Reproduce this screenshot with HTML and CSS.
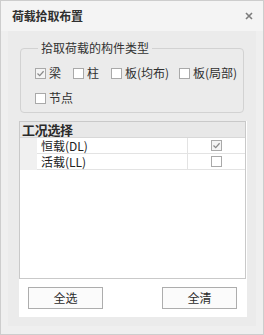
FILE: index.html
```html
<!DOCTYPE html>
<html lang="zh-CN">
<head>
<meta charset="utf-8">
<title>荷载拾取布置</title>
<link rel="stylesheet" href="styles.css">
</head>
<body>
<div class="window">
  <div class="titlebar">
    <span class="title">荷载拾取布置</span>
    <svg class="close" width="8" height="8" viewBox="0 0 8 8"><path d="M1 1L7 7M7 1L1 7" stroke="#7c7c7c" stroke-width="1.6" fill="none"/></svg>
  </div>
  <div class="frame">
    <div class="content">
      <fieldset class="group">
        <legend>拾取荷载的构件类型</legend>
        <div class="checks">
          <label class="item w38"><span class="cb checked"><svg width="9" height="9" viewBox="0 0 9 9"><path d="M1.5 4.5L3.7 6.6L7.6 2.2" stroke="#8a8a8a" stroke-width="1.3" fill="none"/></svg></span>梁</label>
          <label class="item w38"><span class="cb"></span>柱</label>
          <label class="item w68"><span class="cb"></span>板(均布)</label>
          <label class="item"><span class="cb"></span>板(局部)</label>
        </div>
        <div class="checks row2">
          <label class="item"><span class="cb"></span>节点</label>
        </div>
      </fieldset>
      <div class="panel">
        <div class="list">
          <div class="list-head"><span class="head-text">工况选择</span></div>
          <div class="list-row">
            <div class="rh"></div>
            <div class="name"><span class="name-text">恒载(DL)</span></div>
            <div class="chk"><span class="cb checked"><svg width="9" height="9" viewBox="0 0 9 9"><path d="M1.5 4.5L3.7 6.6L7.6 2.2" stroke="#8a8a8a" stroke-width="1.3" fill="none"/></svg></span></div>
          </div>
          <div class="list-row">
            <div class="rh"></div>
            <div class="name"><span class="name-text">活载(LL)</span></div>
            <div class="chk"><span class="cb"></span></div>
          </div>
        </div>
        <div class="buttons">
          <button class="btn">全选</button>
          <button class="btn">全清</button>
        </div>
      </div>
    </div>
  </div>
</div>
</body>
</html>
```
FILE: styles.css
```css
* { box-sizing: border-box; }
html, body { margin: 0; padding: 0; background: #ffffff; }
body { font-family: "Noto Sans CJK SC", "Noto Sans", sans-serif; color: #2b2b2b; }

.window {
  width: 264px;
  height: 335px;
  border: 1px solid #cdcdcd;
  background: #efefef;
  display: flex;
  flex-direction: column;
}

.titlebar {
  height: 30px;
  flex: none;
  background: #f4f4f4;
  display: flex;
  align-items: center;
  justify-content: space-between;
  padding: 0 10px 0 11px;
}
.title {
  font-size: 12px;
  font-weight: bold;
  color: #303030;
  letter-spacing: -0.2px;
  line-height: 14px;
}
.close { display: block; }

.frame {
  flex: 1;
  padding: 0 7px 8px 7px;
  background: #efefef;
  display: flex;
}
.content {
  flex: 1;
  background: #ebebeb;
  display: flex;
  flex-direction: column;
}

.group {
  margin: 10px 0 0 12px;
  width: 224px;
  padding: 0 0 6px 14px;
  border: 1px solid #d2d2d2;
  border-radius: 4px;
  min-width: 0;
}
.group legend {
  margin-left: 3px;
  padding: 0 3px;
  font-size: 12px;
  line-height: 14px;
  color: #333;
}

.checks {
  display: flex;
  align-items: center;
  height: 16px;
  margin-top: 10px;
}
.checks.row2 { margin-top: 9px; }

.item {
  display: flex;
  align-items: center;
  gap: 3px;
  font-size: 12px;
  line-height: 16px;
  color: #303030;
  white-space: nowrap;
}
.w38 { width: 38px; }
.w68 { width: 68px; }

.cb {
  width: 11px;
  height: 11px;
  border: 1px solid #a9a9a9;
  background: #ffffff;
  display: inline-flex;
  align-items: center;
  justify-content: center;
  flex: none;
}
.cb.checked { background: #f4f4f4; }
.cb svg { display: block; }

.panel {
  margin: 8px 0 0 11px;
  width: 228px;
  background: #ffffff;
  display: flex;
  flex-direction: column;
}

.list {
  width: 227px;
  height: 158px;
  border: 1px solid #c9c9c9;
  background: #ffffff;
}
.list-head {
  height: 16px;
  background: #e8e8e8;
  border-bottom: 1px solid #d8d8d8;
  padding-left: 2px;
  display: flex;
  align-items: center;
}
.head-text {
  font-size: 13px;
  font-weight: bold;
  line-height: 15px;
  color: #2a2a2a;
  letter-spacing: -0.3px;
}
.list-row {
  display: flex;
  height: 16px;
}
.rh {
  width: 17px;
  background: #f0f0f0;
  flex: none;
}
.name {
  width: 151px;
  border-bottom: 1px solid #e3e3e3;
  border-right: 1px solid #e3e3e3;
  padding-left: 4px;
  display: flex;
  align-items: center;
}
.name-text {
  font-size: 12px;
  line-height: 15px;
  color: #222;
}
.chk {
  flex: 1;
  border-bottom: 1px solid #e3e3e3;
  display: flex;
  align-items: center;
  justify-content: center;
}

.buttons {
  display: flex;
  justify-content: space-between;
  padding: 8px 10px 8px 9px;
}
.btn {
  width: 75px;
  height: 22px;
  border: 1px solid #adadad;
  background: #fbfbfb;
  font-family: "Noto Sans CJK SC", "Noto Sans", sans-serif;
  font-size: 12px;
  color: #2b2b2b;
  padding: 0;
  line-height: 20px;
  border-radius: 0;
}
```
